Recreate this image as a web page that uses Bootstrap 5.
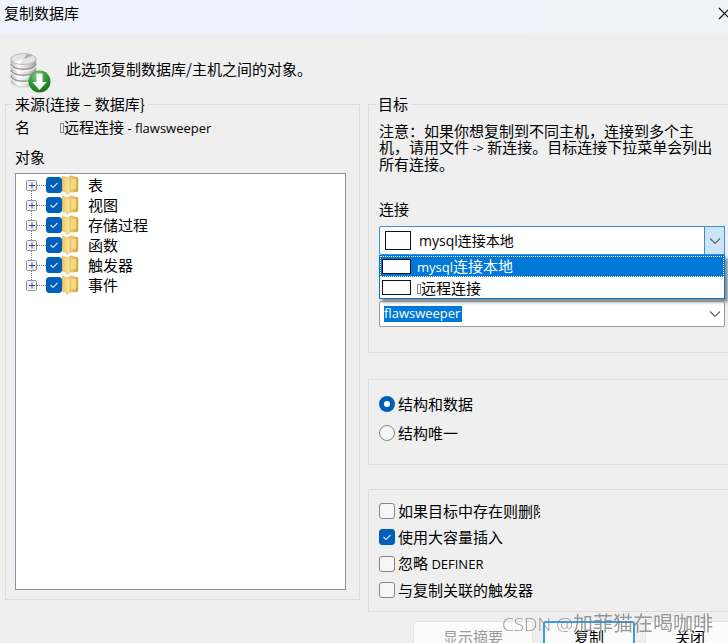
<!DOCTYPE html>
<html lang="zh-CN">
<head>
<meta charset="utf-8">
<meta name="viewport" content="width=device-width, initial-scale=1">
<title>复制数据库</title>
<link href="https://cdn.jsdelivr.net/npm/bootstrap@5.3.0/dist/css/bootstrap.min.css" rel="stylesheet">
<style>
body{background:#efefef;color:#000;font:15px/20px "Noto Sans CJK SC",sans-serif;min-height:100vh;overflow:hidden}
.latin{font-family:"Open Sans","Noto Sans",sans-serif;font-size:13px}
.title-bar{height:34px;background:linear-gradient(90deg,#eff2fc 45%,#edf3f8);padding:3px 0 10px 4px}
.close-btn{width:12px;height:20px;overflow:hidden}
.intro{height:60px;padding:15px 0 0 9px}
.intro p{padding:0 0 5px 15px}
.panes{gap:8px;padding-left:5px}
.source-col{flex:355 1 0;min-width:0}
.target-col{flex:360 1 0;min-width:0}
.group{border:1px solid #dcdcdc;padding:0 9px;min-width:0}
.group legend{font-size:15px;line-height:20px;padding:0 3px 0 2px;margin-left:-3px}
.source{padding-right:13px;padding-bottom:9px}
.source legend{margin-left:-2px}
.name-row{padding:3px 0 5px}
.name-row>span:first-child{width:45px}
.tofu{display:inline-block;width:4px;height:10px;border:1px solid #888}
.tree{background:#fff;border:1px solid #8b90a0;min-height:417px;padding:1px 10px;margin-top:6px}
.tree li{height:20px}
.tree .expander{width:20px;height:20px}
.tree label{padding-left:9px}
.tick{appearance:none;width:16px;height:16px;margin:0;flex:none;border:1px solid #858585;border-radius:3px;background:#f6f6f6}
.tick:checked{border-color:#005fb8;background:#005fb8 url("data:image/svg+xml,%3Csvg xmlns='http://www.w3.org/2000/svg' viewBox='0 0 14 14'%3E%3Cpath d='M3.5 7 6 9.5 10.5 5' fill='none' stroke='%23cfe4f7' stroke-width='1.1'/%3E%3C/svg%3E")}
.tick[type=radio]{border-radius:50%}
.tick[type=radio]:checked{border:5px solid #005fb8;background:#fff}
.target{padding:0 3px 25px 10px;border-right:0}
.note{line-height:16px;padding:9px 6px 0 0;margin-bottom:27px}
.conn-label{margin-bottom:7px}
.combo select{appearance:none;width:100%;border:1px solid #999;border-radius:2px;background:#fff;color:#000;font:14px/20px "Open Sans","Noto Sans CJK SC",sans-serif;outline:0}
.combo .conn{height:29px;border-color:#3b8edb;padding:0 22px 0 39px}
.combo .db{height:26px;color:#fff;font-size:13px;padding:0 22px 2px 4px;background:linear-gradient(#0078d7,#0078d7) 4px 4px/78px 16px no-repeat #fff}
.combo .arrow{top:0;right:0;bottom:0;width:21px;pointer-events:none}
.combo .arrow.open{background:#cce4f7;border:1px solid #3b8edb}
.combo .swatch{left:6px;top:5px;width:26px;height:19px;pointer-events:none}
.combo .swatch{border:1px solid #111;background:#fff}
.db-combo{margin-top:46px}
.options{left:0;right:0;top:29px;z-index:2;background:#fff;border:1px solid #0078d7;box-shadow:3px 3px 3px #888}
.options button{height:21px;border:0;background:#fff;padding:0 2px;gap:6px;color:#000}
.options button.chosen{background:#0078d7;color:#fff;outline:1px dotted #fff;outline-offset:-1px}
.options button .swatch{width:29px;height:15px}
.choice-box{margin-top:26px;padding:14px 10px 21px;border-right:0;gap:9px}
.flag-box{margin-top:24px;padding:11px 10px 11px;border-right:0;gap:6px}
.opt{gap:3px}
.clip{width:142px;overflow:hidden;white-space:nowrap}
.actions{padding:9px 0 0 45px;gap:10px}
.actions button{height:30px;border:1px solid #e6e6e6;border-radius:3px;background:#fbfbfb;color:#000;padding:2px 0 0;flex:none}
.actions .summary{width:120px;color:#9b9b9b}
.actions .copy{width:92px;border:2px solid #3b9be6;padding:1px 0 0}
.actions .shut{width:90px}
.watermark{right:15px;bottom:5px;font-size:20px;line-height:28px;color:#777b;pointer-events:none;z-index:3;white-space:nowrap}
.watermark span{font-family:"Open Sans",sans-serif;font-size:19px;font-weight:300}
</style>
<script src="https://cdn.jsdelivr.net/npm/bootstrap@5.3.0/dist/js/bootstrap.bundle.min.js"></script>
</head>
<body>
<svg class="position-absolute" width="0" height="0" aria-hidden="true">
  <defs>
    <linearGradient id="foldA"><stop stop-color="#e9c860"/><stop offset="1" stop-color="#fbeaa0"/></linearGradient>
    <linearGradient id="foldB"><stop stop-color="#f8d57c"/><stop offset="1" stop-color="#dba63c"/></linearGradient>
  </defs>
  <symbol id="plus" viewBox="0 0 20 20"><path d="M11 10.500h9" stroke="#777" stroke-dasharray="1 1"/><rect x=".5" y="5.500" width="10" height="10" rx="1" fill="#f2f2f2" stroke="#909090"/><path d="M3 10.500h6M6 7.500v6" stroke="#244a9b"/></symbol>
  <symbol id="up" viewBox="0 0 20 20"><path d="M5.500 0v5" stroke="#777" stroke-dasharray="1 1"/></symbol>
  <symbol id="down" viewBox="0 0 20 20"><path d="M5.500 16v4" stroke="#777" stroke-dasharray="1 1"/></symbol>
  <symbol id="folder" viewBox="0 0 17 20"><path d="M6 2.500 8 1h3l1 1h3l1 1v13l-1 1H7z" fill="url(#foldB)" stroke="#d8ae50" stroke-width=".5"/><path d="M9 4h5v10H9z" fill="#f7d884"/><path d="M14 13h1.500v2H14z" fill="#8db778"/><path d="M0 1.500 8 3v14l-3 2.500L4 17l-4-1z" fill="url(#foldA)" stroke="#d5b451" stroke-width=".6"/></symbol>
  <symbol id="chev" viewBox="0 0 12 8"><path d="m1 1.500 5 5 5-5" fill="none" stroke="#666" stroke-width="1.200"/></symbol>
</svg>

<header class="title-bar d-flex justify-content-between">
  <span>复制数据库</span>
  <button type="button" class="close-btn border-0 p-0 bg-transparent d-flex align-items-center" aria-label="关闭窗口"><svg class="flex-shrink-0" width="14" height="14" viewBox="0 0 14 14"><path d="m3 2 11 11M14 2 3 13" stroke="#111" stroke-width="1.200"/></svg></button>
</header>

<div class="intro d-flex align-items-center">
  <svg width="42" height="44" viewBox="0 0 42 44" class="flex-shrink-0" aria-hidden="true">
    <defs>
      <linearGradient id="metal"><stop stop-color="#b4b4b4"/><stop offset=".3" stop-color="#fafafa"/><stop offset=".65" stop-color="#d8d8d8"/><stop offset="1" stop-color="#9c9c9c"/></linearGradient>
      <radialGradient id="green" cx=".4" cy=".25" r=".8"><stop stop-color="#86c886"/><stop offset=".5" stop-color="#329a38"/><stop offset="1" stop-color="#147018"/></radialGradient>
    </defs>
    <path d="M2 9v22c0 8 25 8 25 0V9z" fill="url(#metal)" stroke="#bbb" stroke-width=".6"/>
    <path d="M2 14c1 7 24 7 25 0M2 20c1 7 24 7 25 0M2 26c1 7 24 7 25 0" fill="none" stroke="#9a9a9a" stroke-width="1.300"/>
    <path d="M2 16c1 7 24 7 25 0M2 22c1 7 24 7 25 0M2 28c1 7 24 7 25 0" fill="none" stroke="#fff" stroke-width="1"/>
    <ellipse cx="14.500" cy="9" rx="12.500" ry="5.500" fill="#e3e3e3" stroke="#bbb"/>
    <path d="M14.500 9 24 5.500 18 4z" fill="#aaa"/><path d="M14.500 9 5 12l6 2z" fill="#fff"/>
    <circle cx="30.500" cy="31.500" r="11" fill="url(#green)"/>
    <path d="M27.500 23.500h6V32h4l-7 8-7-8h4z" fill="#fff"/>
  </svg>
  <p class="m-0">此选项复制数据库/主机之间的对象。</p>
</div>

<main class="panes d-flex align-items-start">
  <section class="source-col">
    <fieldset class="group source">
      <legend class="float-none w-auto mb-0">来源{连接 – 数据库}</legend>
      <div class="name-row d-flex"><span>名</span><span><i class="tofu"></i>远程连接 <span class="latin">- flawsweeper</span></span></div>
      <div>
        <div class="mt-1">对象</div>
        <ul class="tree list-unstyled mb-0">
          <li class="d-flex align-items-center"><svg class="expander"><use href="#down"/><use href="#plus"/></svg><input class="tick" type="checkbox" id="t1" checked><svg width="17" height="20"><use href="#folder"/></svg><label for="t1">表</label></li>
          <li class="d-flex align-items-center"><svg class="expander"><use href="#up"/><use href="#down"/><use href="#plus"/></svg><input class="tick" type="checkbox" id="t2" checked><svg width="17" height="20"><use href="#folder"/></svg><label for="t2">视图</label></li>
          <li class="d-flex align-items-center"><svg class="expander"><use href="#up"/><use href="#down"/><use href="#plus"/></svg><input class="tick" type="checkbox" id="t3" checked><svg width="17" height="20"><use href="#folder"/></svg><label for="t3">存储过程</label></li>
          <li class="d-flex align-items-center"><svg class="expander"><use href="#up"/><use href="#down"/><use href="#plus"/></svg><input class="tick" type="checkbox" id="t4" checked><svg width="17" height="20"><use href="#folder"/></svg><label for="t4">函数</label></li>
          <li class="d-flex align-items-center"><svg class="expander"><use href="#up"/><use href="#down"/><use href="#plus"/></svg><input class="tick" type="checkbox" id="t5" checked><svg width="17" height="20"><use href="#folder"/></svg><label for="t5">触发器</label></li>
          <li class="d-flex align-items-center"><svg class="expander"><use href="#up"/><use href="#plus"/></svg><input class="tick" type="checkbox" id="t6" checked><svg width="17" height="20"><use href="#folder"/></svg><label for="t6">事件</label></li>
        </ul>
      </div>
    </fieldset>
  </section>

  <section class="target-col">
    <fieldset class="group target">
      <legend class="float-none w-auto mb-0">目标</legend>
      <p class="note">注意：如果你想复制到不同主机，连接到多个主机，请用文件 <span class="latin">-&gt;</span> 新连接。目标连接下拉菜单会列出所有连接。</p>
      <label class="conn-label d-block" for="conn">连接</label>
      <div class="combo position-relative">
        <select class="conn d-block" id="conn"><option>mysql连接本地</option><option>远程连接</option></select>
        <span class="swatch position-absolute"></span>
        <span class="arrow open position-absolute d-flex align-items-center justify-content-center"><svg width="12" height="8"><use href="#chev"/></svg></span>
        <div class="options position-absolute" role="listbox" aria-label="连接">
          <button type="button" role="option" aria-selected="true" class="chosen d-flex align-items-center w-100"><span class="swatch"></span><span><span class="latin">mysql</span>连接本地</span></button>
          <button type="button" role="option" aria-selected="false" class="d-flex align-items-center w-100"><span class="swatch"></span><span><i class="tofu"></i>远程连接</span></button>
        </div>
      </div>
      <div class="combo db-combo position-relative">
        <select class="db d-block" aria-label="数据库"><option>flawsweeper</option></select>
        <span class="arrow position-absolute d-flex align-items-center justify-content-center"><svg width="12" height="8"><use href="#chev"/></svg></span>
      </div>
    </fieldset>

    <div class="group choice-box d-flex flex-column" role="radiogroup" aria-label="复制内容">
      <div class="opt d-flex align-items-center"><input class="tick" type="radio" name="mode" id="r1" checked><label for="r1">结构和数据</label></div>
      <div class="opt d-flex align-items-center"><input class="tick" type="radio" name="mode" id="r2"><label for="r2">结构唯一</label></div>
    </div>

    <div class="group flag-box d-flex flex-column">
      <div class="opt d-flex align-items-center"><input class="tick" type="checkbox" id="c1"><label class="clip" for="c1">如果目标中存在则删除</label></div>
      <div class="opt d-flex align-items-center"><input class="tick" type="checkbox" id="c2" checked><label for="c2">使用大容量插入</label></div>
      <div class="opt d-flex align-items-center"><input class="tick" type="checkbox" id="c3"><label for="c3">忽略 <span class="latin">DEFINER</span></label></div>
      <div class="opt d-flex align-items-center"><input class="tick" type="checkbox" id="c4"><label for="c4">与复制关联的触发器</label></div>
    </div>

    <div class="actions d-flex">
      <button type="button" class="summary" disabled>显示摘要</button>
      <button type="button" class="copy">复制</button>
      <button type="button" class="shut">关闭</button>
    </div>
  </section>
</main>
<div class="watermark position-fixed"><span>CSDN @</span>加菲猫在喝咖啡</div>
</body>
</html>
